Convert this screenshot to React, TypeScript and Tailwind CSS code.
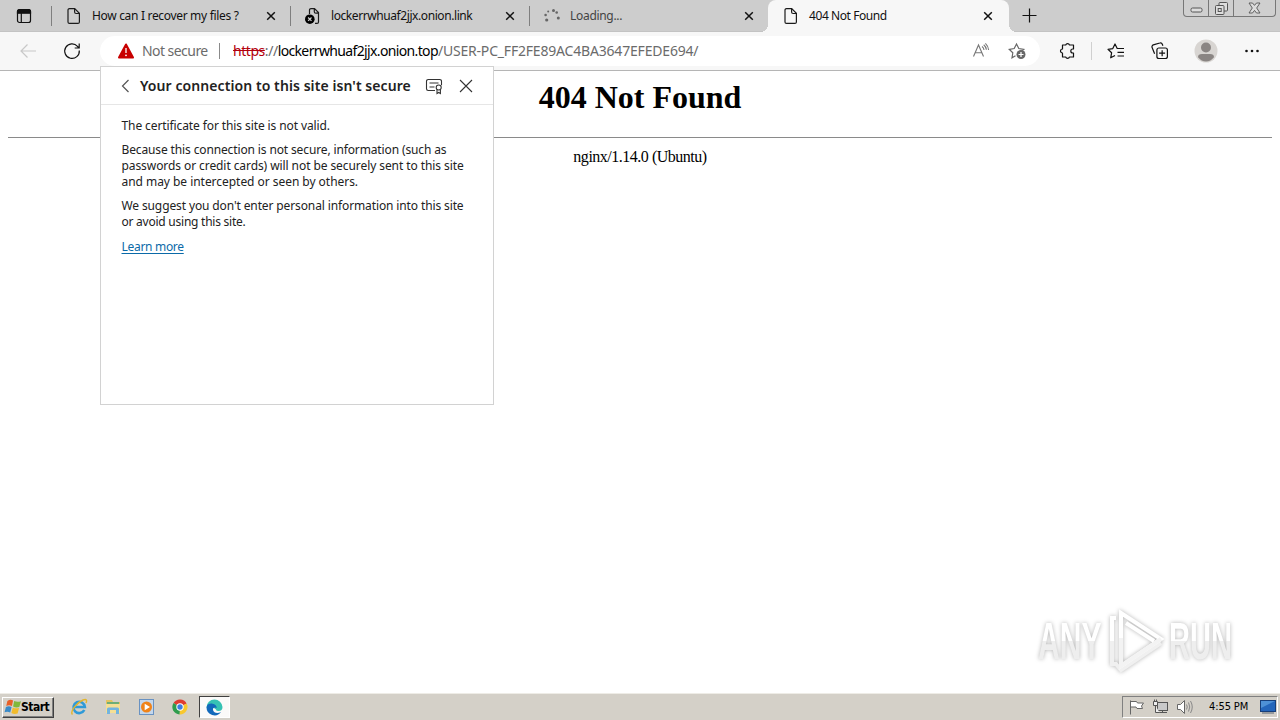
import type { ReactNode } from "react";
import clsx from "clsx";

function PageIcon() {
  return (
    <svg width="16" height="18" viewBox="0 0 16 18" fill="none" stroke="#1b1b1b" strokeWidth="1.2">
      <path d="M3.5 1.6h5.2l4.7 4.7v8.6a1.5 1.5 0 0 1-1.5 1.5H3.5A1.5 1.5 0 0 1 2 14.9V3.1A1.5 1.5 0 0 1 3.5 1.6z" />
      <path d="M8.6 1.8v3.2a1.5 1.5 0 0 0 1.5 1.5h3.2" />
    </svg>
  );
}

function BlockedPageIcon() {
  return (
    <svg width="16" height="18" viewBox="0 0 16 18" fill="none">
      <path d="M4.5 7V3.1A1.5 1.5 0 0 1 6 1.6h3.5l4 4v9.3a1.5 1.5 0 0 1-1.5 1.5h-2M9.3 1.8V4.7a1.5 1.5 0 0 0 1.5 1.5h2.7" stroke="#1b1b1b" strokeWidth="1.2" />
      <circle cx="4.8" cy="12.2" r="4.8" fill="#000" />
      <path d="M3.1 10.5l3.4 3.4M6.5 10.5l-3.4 3.4" stroke="#d0d0d0" strokeWidth="1.2" />
    </svg>
  );
}

function LoadingIcon() {
  return (
    <svg width="17" height="18" viewBox="0 0 17 18" fill="#666">
      <circle cx="1.6" cy="8" r="1.3" />
      <circle cx="2.7" cy="13" r="1.6" />
      <circle cx="4.2" cy="4.5" r="1" />
      <circle cx="9.5" cy="3.5" r="1.5" />
      <circle cx="12.7" cy="5.5" r="1.3" />
      <circle cx="14.3" cy="11" r="1.5" />
    </svg>
  );
}

function CloseIcon() {
  return (
    <svg width="12" height="12" viewBox="0 0 12 12" stroke="#111" strokeWidth="1.5">
      <path d="M2.2 2.2l7.6 7.6M9.8 2.2L2.2 9.8" />
    </svg>
  );
}

type TabProps = {
  icon: ReactNode;
  title: string;
  active?: boolean;
  textClass: string;
};

function Tab({ icon, title, active, textClass }: TabProps) {
  return (
    <div
      className={clsx(
        "flex h-8 items-center pl-[15px]",
        active
          ? "relative w-[241px] rounded-t-lg bg-[#f7f7f7] before:absolute before:bottom-0 before:-left-2 before:size-2 before:bg-[radial-gradient(circle_at_0_0,transparent_8px,#f7f7f7_8px)] after:absolute after:bottom-0 after:-right-2 after:size-2 after:bg-[radial-gradient(circle_at_100%_0,transparent_8px,#f7f7f7_8px)]"
          : "w-[239px]",
      )}
    >
      <span className="w-[26px] shrink-0">{icon}</span>
      <span className={clsx("w-[173px] shrink-0 whitespace-pre", textClass)}>{title}</span>
      <CloseIcon />
    </div>
  );
}

function Divider() {
  return <div className="-mr-px mt-[6px] h-5 w-px shrink-0 bg-[#7f7f7f]" />;
}

function WindowButtons() {
  return (
    <div className="ml-auto mr-1 flex h-[17px] w-[93px] rounded-b-[4px] border border-t-0 border-[#777] bg-[#cfcfcf]">
      <div className="flex w-[25px] items-center justify-center border-r border-[#777]">
        <svg width="13" height="6" className="mt-[3px]" viewBox="0 0 13 6">
          <rect x="1" y="1" width="11" height="4" rx="1.5" fill="#ddd" stroke="#555" />
        </svg>
      </div>
      <div className="flex w-[25px] items-center justify-center border-r border-[#777]">
        <svg width="13" height="13" viewBox="0 0 13 13" fill="#ddd" stroke="#555">
          <rect x="4" y="0.5" width="8.5" height="8.5" rx="1" />
          <rect x="0.5" y="3.5" width="8.5" height="9" rx="1" />
          <rect x="3.2" y="6.5" width="3" height="3" />
        </svg>
      </div>
      <div className="flex flex-1 items-center justify-center">
        <svg width="13" height="12" viewBox="0 0 13 12" fill="#ddd" stroke="#555" strokeWidth="0.9">
          <path d="M1 1h3.5l2 2.4 2-2.4H12L8.7 6l3.3 5H8.5l-2-2.6-2 2.6H1l3.3-5z" />
        </svg>
      </div>
    </div>
  );
}

function TabStrip() {
  return (
    <div className="flex h-8 shrink-0 border-b border-[#c3c3c3] bg-[#cdcdcd] font-['Noto_Sans','Open_Sans',sans-serif] text-[12px] text-[#111]">
      <div className="flex w-[51px] items-center pl-4">
        <svg width="16" height="16" viewBox="0 0 16 16" fill="none" stroke="#111" strokeWidth="1.2">
          <rect x="1.5" y="1.5" width="13" height="13" rx="2" />
          <path d="M1.5 3.5a2 2 0 0 1 2-2h9a2 2 0 0 1 2 2v1.7h-13z" fill="#111" />
          <path d="M5.3 5v9.5" />
        </svg>
      </div>
      <Divider />
      <Tab icon={<PageIcon />} title="How can I recover my files ?" textClass="tracking-[-0.32px]" />
      <Divider />
      <Tab icon={<BlockedPageIcon />} title="lockerrwhuaf2jjx.onion.link" textClass="tracking-[-0.42px]" />
      <Divider />
      <Tab icon={<LoadingIcon />} title="Loading..." textClass="tracking-[-0.3px] text-[#444]" />
      <Tab icon={<PageIcon />} title="404 Not Found" active textClass="tracking-[-0.42px]" />
      <div className="flex w-10 items-center justify-center">
        <svg width="15" height="15" viewBox="0 0 15 15" stroke="#111" strokeWidth="1.2">
          <path d="M7.5 0.5v14M0.5 7.5h14" />
        </svg>
      </div>
      <WindowButtons />
    </div>
  );
}

function AddressBar() {
  return (
    <div className="flex h-[30px] w-[940px] shrink-0 items-center rounded-full bg-white pl-[17px] font-['Noto_Sans','Open_Sans',sans-serif] text-[14px] text-[#6b6b6b]">
      <svg width="18" height="16" viewBox="0 0 18 16">
        <path d="M9 1.5L16 14.5H2z" fill="#c80000" stroke="#c80000" strokeWidth="2" strokeLinejoin="round" />
        <path d="M9 5v5" stroke="#fff" strokeWidth="1.3" />
        <circle cx="9" cy="12.3" r="0.9" fill="#fff" />
      </svg>
      <span className="ml-[7px] w-[77px] whitespace-nowrap pb-px tracking-[-0.55px]">Not secure</span>
      <span className="mr-[13px] h-4 w-px bg-[#8a8a8a]" />
      <span className="whitespace-nowrap pb-px">
        <span className="tracking-[-0.45px] text-[#b3000c] line-through">https</span>
        <span className="tracking-[-0.45px]">://</span>
        <span className="tracking-[-0.64px] text-black">lockerrwhuaf2jjx.onion.top</span>
        <span className="tracking-[-0.19px]">/USER-PC_FF2FE89AC4BA3647EFEDE694/</span>
      </span>
      <div className="ml-auto mr-[13px] flex items-center gap-[18px]">
        <svg width="18" height="18" viewBox="0 0 18 18" fill="none" stroke="#777" strokeWidth="1.1">
          <path d="M1.5 14.5L6.5 3l5 11.5M3.2 10.7h6.6" />
          <path d="M10 4.5q1.8 1.3 2 3.5M11.7 2.8q2.5 2 2.7 5M13.4 1.3Q16.3 4 16.6 8" />
        </svg>
        <svg width="19" height="18" viewBox="0 0 19 18" fill="none" stroke="#666" strokeWidth="1.2">
          <path d="M7.5 13.8L4 15.8l.8-5L1.2 7.3l5-.8L8.5 2l2.3 4.5 5 .8-1.5 1.3" />
          <circle cx="13" cy="12.5" r="4.5" fill="#666" stroke="none" />
          <path d="M13 10v5M10.5 12.5h5" stroke="#fff" />
        </svg>
      </div>
    </div>
  );
}

function Toolbar() {
  return (
    <div className="flex h-[39px] shrink-0 items-center border-b border-[#b5b5b5] bg-[#f7f7f7]">
      <div className="flex w-[100px] shrink-0 items-center gap-[26px] pl-[19px]">
        <svg width="18" height="18" viewBox="0 0 18 18" fill="none" stroke="#c8c8c8" strokeWidth="1.2">
          <path d="M17 9H2M8.5 2.5L2 9l6.5 6.5" />
        </svg>
        <svg width="18" height="18" viewBox="0 0 18 18" fill="none" stroke="#111" strokeWidth="1.2">
          <path d="M16.3 8.5A7.3 7.3 0 1 1 14.5 4.3L16 6M16.2 1.5V6h-4.5" />
        </svg>
      </div>
      <AddressBar />
      <div className="flex flex-1 items-center pl-[18px]">
        <svg width="18" height="18" viewBox="0 0 18 18" fill="none" stroke="#111" strokeWidth="1.2" strokeLinejoin="round">
          <path d="M4.5 3h3.2a2 2 0 0 1 3.8 0H15.5v4h-.7a2 2 0 0 0 0 4h.7v4H11.5a2 2 0 0 1-3.8 0H4.5v-4a2 2 0 0 1 0-4z" />
        </svg>
        <span className="ml-[15px] h-[18px] w-px bg-[#d0d0d0]" />
        <svg className="ml-[14px]" width="19" height="18" viewBox="0 0 19 18" fill="none" stroke="#111" strokeWidth="1.2" strokeLinejoin="round">
          <path d="M9 13.5l-4.3 2.3.9-5L2 7.3l4.8-.7L9 2l2.2 4.5H18M11.5 10.3H18M11.5 14H18" />
        </svg>
        <svg className="ml-[25px]" width="19" height="18" viewBox="0 0 19 18" fill="none" stroke="#111" strokeWidth="1.2">
          <rect x="6.9" y="6" width="10.5" height="10.5" rx="2" />
          <path d="M12.15 8.2v6M9.1 11.2h6M4.6 11.8L2.1 5.5a2 2 0 0 1 1.2-2.6L9.8 1a2 2 0 0 1 2.5 1.2l.6 1.6" />
        </svg>
        <svg className="ml-[25px]" width="24" height="24" viewBox="0 0 24 24">
          <circle cx="12" cy="12" r="11.5" fill="#d8d5d2" />
          <circle cx="12" cy="8.5" r="5" fill="#8a8583" />
          <path d="M4 18.3q0-3.3 4-3.3h8q4 0 4 3.3-3.3 4.2-8 4.2t-8-4.2z" fill="#8a8583" />
        </svg>
        <svg className="ml-[26px]" width="16" height="4" viewBox="0 0 16 4" fill="#111">
          <circle cx="2.5" cy="2" r="1.3" />
          <circle cx="8" cy="2" r="1.3" />
          <circle cx="13.5" cy="2" r="1.3" />
        </svg>
      </div>
    </div>
  );
}

function SecurityPopup() {
  return (
    <section className="absolute left-[100px] top-[66px] h-[339px] w-[394px] border border-[#d2d2d2] bg-white font-['Noto_Sans','Open_Sans',sans-serif] text-[#222]">
      <header className="flex h-[38px] items-center border-b border-[#e6e6e6] pl-[19px]">
        <svg width="10" height="14" viewBox="0 0 10 14" fill="none" stroke="#555" strokeWidth="1.2">
          <path d="M8.5 1L2.5 7l6 6" />
        </svg>
        <h2 className="ml-[10px] w-[285px] whitespace-nowrap text-[14px] font-semibold tracking-[0.08px]">
          Your connection to this site isn't secure
        </h2>
        <svg width="18" height="18" viewBox="0 0 18 18" fill="none" stroke="#333" strokeWidth="1.1">
          <path d="M10 13.5H3.2A1.7 1.7 0 0 1 1.5 11.8V4.2a1.7 1.7 0 0 1 1.7-1.7h11.6a1.7 1.7 0 0 1 1.7 1.7v4M4.5 6h9M4.5 10h5" />
          <circle cx="13.7" cy="10.5" r="2.5" />
          <path d="M12 12.5v4l1.7-1 1.7 1v-4" />
        </svg>
        <svg className="ml-4" width="14" height="14" viewBox="0 0 14 14" stroke="#333" strokeWidth="1.1">
          <path d="M1 1l12 12M13 1L1 13" />
        </svg>
      </header>
      <div className="flex flex-col gap-2 whitespace-nowrap pl-[20.5px] pt-[13px] text-[12px] leading-4 tracking-[-0.1px]">
        <p>The certificate for this site is not valid.</p>
        <p>
          <span className="tracking-[-0.13px]">Because this connection is not secure, information (such as</span>
          <br />
          <span className="tracking-[-0.08px]">passwords or credit cards) will not be securely sent to this site</span>
          <br />
          <span className="tracking-[-0.04px]">and may be intercepted or seen by others.</span>
        </p>
        <p>
          <span className="tracking-[-0.12px]">We suggest you don't enter personal information into this site</span>
          <br />
          <span className="tracking-[-0.24px]">or avoid using this site.</span>
        </p>
        <a className="mt-px self-start tracking-[-0.3px] text-[#0b6aa8] underline underline-offset-2">Learn more</a>
      </div>
    </section>
  );
}

function Watermark() {
  return (
    <div className="absolute left-[1038px] top-[608px] flex h-[66px] w-[200px] items-center font-['Liberation_Sans',sans-serif] text-[51px] font-bold leading-none drop-shadow-[0_0_2px_#b5b5b5]">
      <span className="w-[68px] shrink-0">
        <span className="inline-block origin-left scale-x-[0.59] bg-linear-to-b from-white from-50% to-[#eeeeee] to-50% bg-clip-text text-transparent">ANY</span>
      </span>
      <svg className="shrink-0" width="60" height="66" viewBox="0 0 60 66" fill="none" strokeWidth="4">
        <path d="M10 10H6v46h4l5 6 40-27" stroke="#f0f0f0" />
        <path d="M15 5l40 26-40 27z" stroke="#fff" />
        <path d="M15 30v28l40-27" stroke="#f3f3f3" />
        <path d="M6 33V10h4M20 15l28 18" stroke="#fff" />
      </svg>
      <span className="ml-[3px] w-[66px] shrink-0">
        <span className="inline-block origin-left scale-x-[0.57] bg-linear-to-b from-white from-50% to-[#eeeeee] to-50% bg-clip-text text-transparent">RUN</span>
      </span>
    </div>
  );
}

function PageContent() {
  return (
    <main className="flex-1 bg-white px-2 text-center font-['Liberation_Serif',serif] text-black">
      <h1 className="pt-[8px] text-[32px] font-bold leading-[37px]">404 Not Found</h1>
      <hr className="mt-[21px] border-t border-[#8a8a8a]" />
      <p className="mt-[10px] text-[16px] leading-[18px] tracking-[-0.49px]">nginx/1.14.0 (Ubuntu)</p>
    </main>
  );
}

function ExplorerIcon() {
  return (
    <svg width="18" height="18" viewBox="0 0 18 18" fill="none">
      <path d="M14.3 12a5.7 5.7 0 1 1 .6-3H4" stroke="#2f9ad8" strokeWidth="2.6" />
      <path d="M2.5 16.5C-.5 13.5 7 4.5 13 2c4-1.5 4 1 3 3" stroke="#e3b52c" strokeWidth="1.4" />
    </svg>
  );
}

function FolderIcon() {
  return (
    <svg width="18" height="18" viewBox="0 0 18 18">
      <path d="M2 2h6l1 2h7v11H2z" fill="#e3c461" />
      <path d="M3 4h12v3H3z" fill="#6fae76" />
      <path d="M2 6h14v9H2z" fill="#f5df94" />
      <path d="M3 16v-5q0-1.500 1.500-1.500h9q1.500 0 1.500 1.500v5h-3v-4H6v4z" fill="#73b4df" />
    </svg>
  );
}

function MediaIcon() {
  return (
    <svg width="18" height="18" viewBox="0 0 18 18">
      <rect x="1.5" y="1.5" width="14" height="15" fill="#c4d7ec" stroke="#6992c2" />
      <circle cx="8.5" cy="9" r="5.5" fill="#f08319" />
      <path d="M6.7 5.8v6.4L12 9z" fill="#fff" />
    </svg>
  );
}

function ChromeIcon() {
  return (
    <svg width="16" height="16" viewBox="0 0 16 16">
      <path d="M8 8L1.5 4A7.5 7.5 0 0 1 14.6 4.5z" fill="#df3c30" />
      <path d="M8 8l6.6-3.5A7.5 7.5 0 0 1 7.5 15.5z" fill="#f8c82d" />
      <path d="M8 8l-.5 7.5A7.5 7.5 0 0 1 1.5 4z" fill="#2e9c4d" />
      <circle cx="8" cy="8" r="3.7" fill="#fff" />
      <circle cx="8" cy="8" r="2.7" fill="#3d7de0" />
    </svg>
  );
}

function EdgeIcon() {
  return (
    <svg width="17" height="17" viewBox="0 0 17 17">
      <path d="M.5 8.5A8 8 0 0 1 8.5 .5a8 8 0 0 1 8 7.5q0 4-4 4-2.5 0-2.5-1.5L8 9z" fill="#36c2b4" />
      <path d="M.5 8.5C1 5 4 4.3 6.5 4.7c2.8.4 4.3 2.5 4.2 4.3-2.2-1.5-4.2 0-3.7 2 .7 3 4.5 3.8 8 2A8 8 0 0 1 .5 8.5z" fill="#1269bb" />
    </svg>
  );
}

function Taskbar() {
  return (
    <footer className="flex h-[27px] shrink-0 items-center border-t border-[#eeece6] bg-[#d4d0c8] pl-[2px]">
      <button className="flex h-[21px] w-[52px] items-center border border-b-[#404040] border-l-white border-r-[#404040] border-t-white pl-px shadow-[inset_-1px_-1px_0_#808080]">
        <svg width="17" height="16" viewBox="0 0 15 16" className="shrink-0" preserveAspectRatio="none">
          <path d="M3 2q2.5-2 5-.5L7 7Q4.5 5.5 2 7z" fill="#e86028" />
          <path d="M9 2q2.5 1.5 6 .3L13.5 8q-3 1-5.500-.5z" fill="#80b83b" />
          <path d="M1.7 8q2.500-1.500 5 0l-1.200 5.500Q3 12 .5 13.300z" fill="#398ac8" />
          <path d="M7.8 8.5q2.5 1.5 5.500.4L12 14.500q-3 1-5.500-.5z" fill="#f1bb2c" />
        </svg>
        <span className="font-['DejaVu_Sans_Condensed','DejaVu_Sans',sans-serif] text-[12px] font-bold tracking-[-0.5px] text-black">Start</span>
      </button>
      <div className="ml-4 flex items-center gap-4">
        <ExplorerIcon />
        <FolderIcon />
        <MediaIcon />
        <ChromeIcon />
      </div>
      <div className="ml-[11px] flex h-[22px] w-[31px] items-center justify-center border border-b-white border-l-[#404040] border-r-white border-t-[#404040] bg-[#fbfaf9]">
        <EdgeIcon />
      </div>
      <div className="ml-auto mr-[2px] flex h-[22px] w-[156px] items-center border border-b-white border-l-[#808080] border-r-white border-t-[#808080] pl-[5px]">
        <svg width="17" height="16" viewBox="0 0 17 16" fill="#fff" stroke="#666">
          <path d="M2.5 1.5v14M2.5 2.5h6l1 1.5h6l-2 3 1 2.5H9l-1-1.5H2.5" />
        </svg>
        <svg className="ml-[7px]" width="17" height="16" viewBox="0 0 17 16" fill="#eee" stroke="#555">
          <rect x="5.5" y="3.5" width="10" height="8" fill="#c9c9c9" />
          <path d="M7 13.5h8M10.5 11.5v2" />
          <path d="M1.5 2.5h4v4h-4zM2.5.5v2M4.5.5v2M3.5 6.5v7h4" />
        </svg>
        <svg className="ml-[7px]" width="18" height="16" viewBox="0 0 18 16" fill="none" stroke="#666">
          <path d="M1.5 5.5h3l4-4v13l-4-4h-3z" fill="#fff" />
          <path d="M10.5 5.5q1.5 2.5 0 5M12.5 3.5q2.5 4.5 0 9M14.5 2q3.5 6 0 12" stroke="#888" />
        </svg>
        <span className="ml-[15px] w-[51px] whitespace-nowrap pt-px font-['DejaVu_Sans_Condensed','DejaVu_Sans',sans-serif] text-[11px] tracking-[-0.1px] text-black">4:55 PM</span>
        <svg width="16" height="14" viewBox="0 0 16 14">
          <rect x="0.5" y="0.5" width="15" height="11" fill="#2466bb" stroke="#173f7a" />
          <path d="M1 1h14L1 8z" fill="#4e91d6" />
          <path d="M2 13h12" stroke="#5b6774" />
        </svg>
      </div>
    </footer>
  );
}

export default function App() {
  return (
    <div className="relative flex h-[720px] w-[1280px] flex-col overflow-hidden bg-white">
      <TabStrip />
      <Toolbar />
      <PageContent />
      <Taskbar />
      <SecurityPopup />
      <Watermark />
    </div>
  );
}
